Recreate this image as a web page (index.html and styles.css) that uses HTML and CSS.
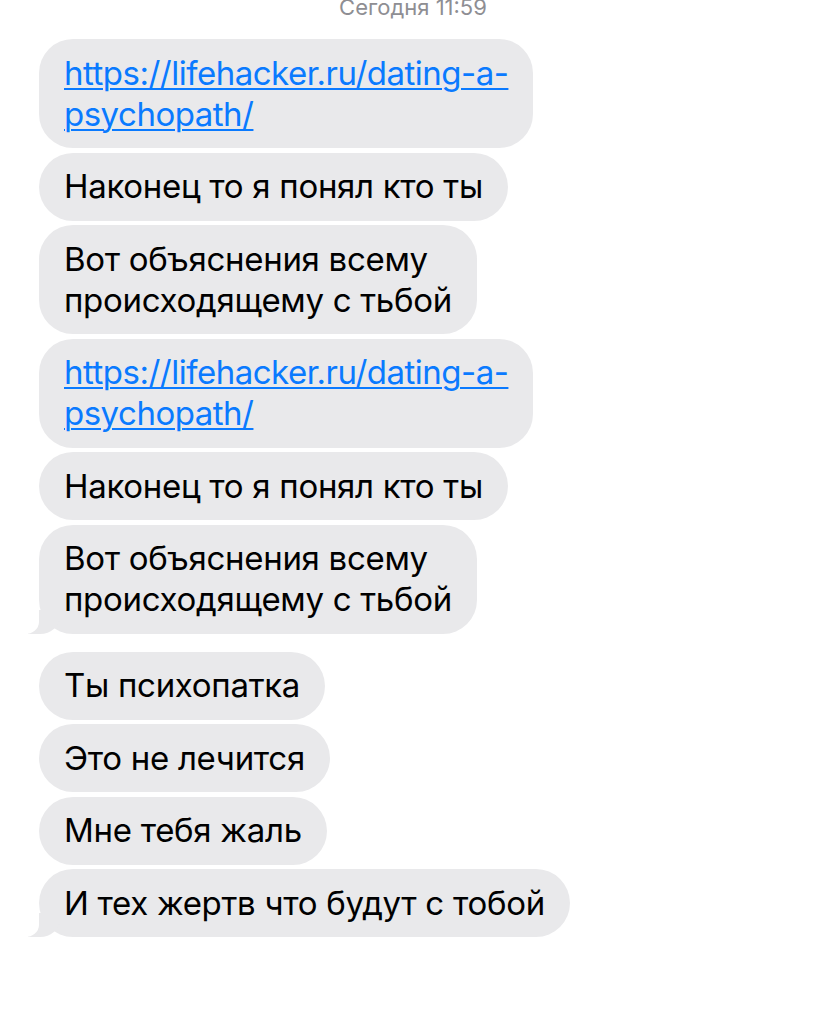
FILE: index.html
```html
<!DOCTYPE html>
<html lang="ru">
<head>
  <meta charset="UTF-8">
  <title>Сообщения</title>
  <link rel="stylesheet" href="styles.css">
</head>
<body>
  <div class="stamp">Сегодня 11:59</div>

  <div class="thread">
    <div class="group">
      <div class="bubble"><a href="#">https://lifehacker.ru/dating-a-<br>psychopath/</a></div>
      <div class="bubble">Наконец то я понял кто ты</div>
      <div class="bubble">Вот объяснения всему<br>происходящему с тьбой</div>
      <div class="bubble"><a href="#">https://lifehacker.ru/dating-a-<br>psychopath/</a></div>
      <div class="bubble">Наконец то я понял кто ты</div>
      <div class="bubble tail">Вот объяснения всему<br>происходящему с тьбой</div>
    </div>

    <div class="group">
      <div class="bubble">Ты психопатка</div>
      <div class="bubble">Это не лечится</div>
      <div class="bubble">Мне тебя жаль</div>
      <div class="bubble tail">И тех жертв что будут с тобой</div>
    </div>
  </div>
</body>
</html>
```

FILE: styles.css
```css
body {
  margin: 0;
  background: #fff;
  font-family: 'Inter', 'Roboto', sans-serif;
  color: #000;
}

.stamp {
  text-align: center;
  font-size: 22px;
  line-height: 22px;
  color: #8e8e93;
  margin-top: -4px;
}

.thread {
  display: flex;
  flex-direction: column;
  gap: 18px;
  padding: 21px 0 0 39px;
}

.group {
  display: flex;
  flex-direction: column;
  align-items: flex-start;
  gap: 4.5px;
}

.bubble {
  position: relative;
  background: #e9e9eb;
  border-radius: 34px;
  padding: 13.5px 25px;
  font-size: 33px;
  line-height: 41px;
  letter-spacing: -0.3px;
}

.bubble a {
  color: #0a7aff;
  letter-spacing: -0.5px;
  text-decoration: underline;
  text-underline-offset: 3px;
  text-decoration-thickness: 2px;
}

.bubble.tail::before {
  content: "";
  position: absolute;
  left: -11px;
  bottom: 0;
  width: 32px;
  height: 24px;
  background: #e9e9eb;
  border-bottom-right-radius: 20px 18px;
}

.bubble.tail::after {
  content: "";
  position: absolute;
  left: -20px;
  bottom: 0;
  width: 20px;
  height: 26px;
  background: #fff;
  border-bottom-right-radius: 14px 12px;
}
```
